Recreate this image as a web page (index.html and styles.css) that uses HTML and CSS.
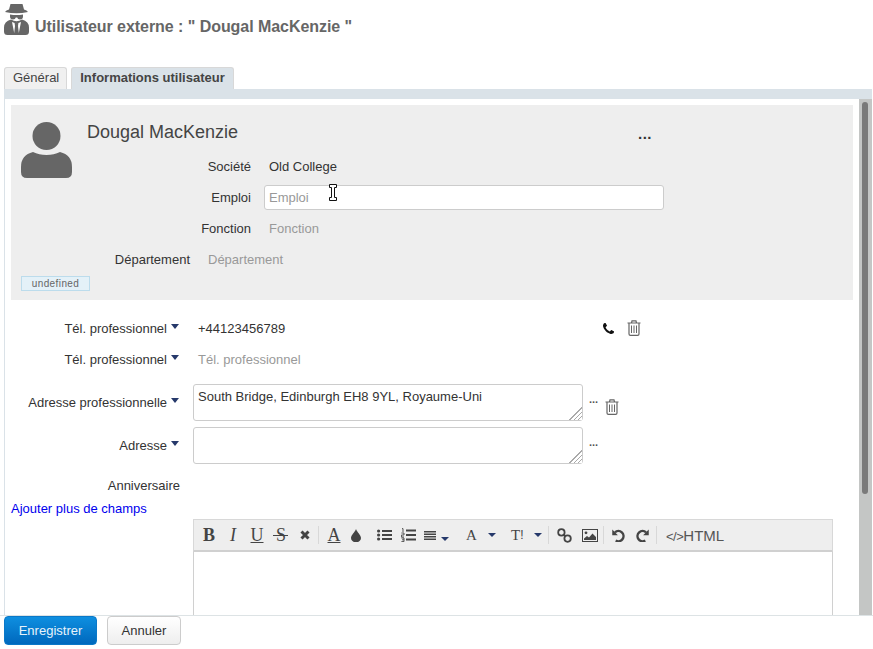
FILE: index.html
```html
<!DOCTYPE html>
<html lang="fr">
<head>
    <meta charset="UTF-8">
    <title>Utilisateur externe</title>
    <link rel="stylesheet" href="styles.css">
</head>
<body>
    <header class="page-title">
        <svg class="spy-icon" viewBox="0 0 25 31" width="25" height="31">
            <path fill="#666" d="M6.5 0 L18.5 0 L20 5.5 Q23 6.2 24 8 Q12.5 10.4 1 8 Q2 6.2 5 5.5 Z"/>
            <path fill="#666" d="M6 10.5 Q12.5 11.5 19 10.5 V12.5 Q19 15.4 16 15.4 Q13.6 15.4 13.2 13.4 H11.8 Q11.4 15.4 9 15.4 Q6 15.4 6 12.5 Z"/>
            <path fill="#666" d="M7 15.5 Q12.5 19 18 15.5 Q25 17.5 25 23.5 V27.5 Q25 31 21.5 31 H3.5 Q0 31 0 27.5 V23.5 Q0 17.5 7 15.5 Z"/>
            <path fill="#fff" d="M8 18 L10.6 19 L11 22 L10.2 29 Z M17 18 L14.4 19 L14 22 L14.8 29 Z"/>
        </svg>
        <h1>Utilisateur externe : " Dougal MacKenzie "</h1>
    </header>

    <nav class="tabs">
        <a class="tab">Général</a>
        <a class="tab tab-active">Informations utilisateur</a>
    </nav>
    <div class="tab-strip"></div>

    <main class="panel">
        <div class="panel-content">
            <section class="profile">
                <svg class="avatar" viewBox="0 0 51 56" width="51" height="56">
                    <circle cx="25.5" cy="14" r="14" fill="#666"/>
                    <path fill="#666" d="M12 30 Q18 33 25.5 33 Q33 33 39 30 Q51 33 51 45 L51 50 Q51 56 45 56 L6 56 Q0 56 0 50 L0 45 Q0 33 12 30 Z"/>
                </svg>
                <div class="profile-main">
                    <div class="profile-name">
                        <span class="name">Dougal MacKenzie</span>
                        <span class="more-dots">...</span>
                    </div>
                    <div class="profile-row">
                        <label>Société</label>
                        <span class="value">Old College</span>
                    </div>
                    <div class="profile-row">
                        <label>Emploi</label>
                        <input class="text-input" type="text" placeholder="Emploi">
                    </div>
                    <div class="profile-row">
                        <label>Fonction</label>
                        <span class="value empty">Fonction</span>
                    </div>
                    <div class="profile-row profile-row-short">
                        <label>Département</label>
                        <span class="value empty">Département</span>
                    </div>
                </div>
                <span class="badge">undefined</span>
            </section>

            <section class="fields">
                <div class="field">
                    <label class="with-caret">Tél. professionnel<i class="caret"></i></label>
                    <div class="field-value">
                        <span class="value phone">+44123456789</span>
                        <svg class="phone-icon" viewBox="0 0 1408 1408" width="11" height="11">
                            <path fill="#111" d="M1408 1112q0 27-10 70.5t-21 68.5q-21 50-122 106-94 51-186 51-27 0-53-3.5t-57.5-12.5-47-14.5-55.5-20.5-49-18q-98-35-175-83-127-79-264-216t-216-264q-48-77-83-175-3-9-18-49t-20.5-55.5-14.5-47-12.5-57.5-3.5-53q0-92 51-186 56-101 106-122 25-11 68.5-21t70.5-10q14 0 21 3 18 6 53 76 11 19 30 54t35 63.5 31 53.5q3 4 17.5 25t21.5 35.5 7 28.5q0 20-28.5 50t-62 55-62 53-28.5 46q0 9 5 22.5t8.5 20.5 14 24 11.5 19q76 137 174 235t235 174q2 1 19 11.5t24 14 20.5 8.5 22.5 5q18 0 46-28.5t53-62 55-62 50-28.5q14 0 28.5 7t35.5 21.5 25 17.5q25 15 53.5 31t63.5 35 54 30q70 35 76 53 3 7 3 21z"/>
                        </svg>
                        <svg class="trash-icon trash-phone" viewBox="0 0 14 16" width="14" height="16">
                            <path fill="none" stroke="#666" stroke-width="1.2" d="M0.5 3 H13.5 M4.5 3 L5 0.8 H9 L9.5 3 M2 3 V14 Q2 15.4 3.4 15.4 H10.6 Q12 15.4 12 14 V3"/>
                            <path fill="none" stroke="#666" d="M4.5 5.5 V13 M7 5.5 V13 M9.5 5.5 V13"/>
                        </svg>
                    </div>
                </div>
                <div class="field">
                    <label class="with-caret">Tél. professionnel<i class="caret"></i></label>
                    <div class="field-value">
                        <span class="value empty">Tél. professionnel</span>
                    </div>
                </div>
                <div class="field field-address">
                    <label class="with-caret">Adresse professionnelle<i class="caret"></i></label>
                    <div class="field-value">
                        <textarea class="address">South Bridge, Edinburgh EH8 9YL, Royaume-Uni</textarea>
                        <span class="small-dots">...</span>
                        <svg class="trash-icon trash-address" viewBox="0 0 14 16" width="14" height="16">
                            <path fill="none" stroke="#666" stroke-width="1.2" d="M0.5 3 H13.5 M4.5 3 L5 0.8 H9 L9.5 3 M2 3 V14 Q2 15.4 3.4 15.4 H10.6 Q12 15.4 12 14 V3"/>
                            <path fill="none" stroke="#666" d="M4.5 5.5 V13 M7 5.5 V13 M9.5 5.5 V13"/>
                        </svg>
                    </div>
                </div>
                <div class="field field-address">
                    <label class="with-caret">Adresse<i class="caret"></i></label>
                    <div class="field-value">
                        <textarea class="address"></textarea>
                        <span class="small-dots">...</span>
                    </div>
                </div>
                <div class="field field-birthday">
                    <label>Anniversaire</label>
                </div>
            </section>

            <a class="add-fields">Ajouter plus de champs</a>

            <section class="editor">
                <div class="toolbar">
                    <span class="tb-btn tb-serif"><b>B</b></span>
                    <span class="tb-btn tb-serif"><i>I</i></span>
                    <span class="tb-btn tb-serif tb-under">U</span>
                    <span class="tb-btn tb-serif tb-strike">S</span>
                    <span class="tb-btn">
                        <svg viewBox="0 0 10 10" width="10" height="10"><path stroke="#444" stroke-width="3" d="M1.5 1.5 L8.5 8.5 M8.5 1.5 L1.5 8.5"/></svg>
                    </span>
                    <span class="tb-sep"></span>
                    <span class="tb-btn tb-serif tb-under">A</span>
                    <span class="tb-btn tb-drop">
                        <svg viewBox="0 0 10 13" width="10" height="13"><path fill="#444" d="M5 0 C6 3 10 6 10 9 A5 4.4 0 0 1 0 9 C0 6 4 3 5 0 Z"/></svg>
                    </span>
                    <span class="tb-btn tb-list">
                        <svg viewBox="0 0 15 12" width="15" height="12">
                            <path fill="#444" d="M5 1 H15 V3 H5 Z M5 5 H15 V7 H5 Z M5 9 H15 V11 H5 Z"/>
                            <circle cx="1.6" cy="2" r="1.6" fill="#444"/><circle cx="1.6" cy="6" r="1.6" fill="#444"/><circle cx="1.6" cy="10" r="1.6" fill="#444"/>
                        </svg>
                    </span>
                    <span class="tb-btn">
                        <svg viewBox="0 0 15 14" width="15" height="14">
                            <path fill="#444" d="M5 1.5 H15 V3.5 H5 Z M5 6 H15 V8 H5 Z M5 10.5 H15 V12.5 H5 Z"/>
                            <path fill="none" stroke="#444" stroke-width="0.9" d="M1 0.6 H2 V4 M0.4 5 H3 V7 H0.4 V9 H3 M0.4 10 H3 V13.6 H0.4 M1 11.8 H3"/>
                        </svg>
                    </span>
                    <span class="tb-btn tb-align">
                        <svg viewBox="0 0 12 9" width="12" height="9"><path fill="#444" d="M0 0 H12 V1.5 H0 Z M0 2.5 H12 V4 H0 Z M0 5 H12 V6.5 H0 Z M0 7.5 H12 V9 H0 Z"/></svg>
                        <i class="tb-caret tb-caret-low"></i>
                    </span>
                    <span class="tb-btn tb-font tb-serif">A<i class="tb-caret"></i></span>
                    <span class="tb-btn tb-size tb-serif">T<small>!</small><i class="tb-caret"></i></span>
                    <span class="tb-sep tb-sep-size"></span>
                    <span class="tb-btn tb-link">
                        <svg viewBox="0 0 15 15" width="15" height="15">
                            <circle cx="4.4" cy="4.4" r="3.2" fill="none" stroke="#444" stroke-width="1.8"/>
                            <circle cx="10.6" cy="10.6" r="3.2" fill="none" stroke="#444" stroke-width="1.8"/>
                            <path stroke="#444" stroke-width="1.8" d="M6.5 6.5 L8.5 8.5"/>
                        </svg>
                    </span>
                    <span class="tb-btn tb-image">
                        <svg viewBox="0 0 16 13" width="16" height="13">
                            <rect x="0.5" y="0.5" width="15" height="12" fill="none" stroke="#444"/>
                            <circle cx="4" cy="3.8" r="1.4" fill="#444"/>
                            <path fill="#444" d="M2 11 L2 9.5 L5 7 L7 8.5 L10.5 4.5 L14 8 V11 Z"/>
                        </svg>
                    </span>
                    <span class="tb-sep tb-sep-image"></span>
                    <span class="tb-btn tb-undo">
                        <svg viewBox="0 0 14 14" width="13" height="13">
                            <path fill="none" stroke="#444" stroke-width="2.6" d="M3.2 3.6 A5.5 5.5 0 1 1 4 12.4"/>
                            <path fill="#444" d="M0.3 0.6 L0.3 6.6 L6.3 6.6 Z"/>
                        </svg>
                    </span>
                    <span class="tb-btn tb-redo">
                        <svg viewBox="0 0 14 14" width="13" height="13">
                            <path fill="none" stroke="#444" stroke-width="2.6" d="M10.8 3.6 A5.5 5.5 0 1 0 10 12.4"/>
                            <path fill="#444" d="M13.7 0.6 L13.7 6.6 L7.7 6.6 Z"/>
                        </svg>
                    </span>
                    <span class="tb-sep tb-sep-redo"></span>
                    <span class="tb-html"><small>&lt;/&gt;</small>HTML</span>
                </div>
                <div class="editor-body"></div>
            </section>
        </div>
        <div class="scrollbar"><div class="scroll-thumb"></div></div>
    </main>

    <footer class="actions">
        <button class="btn btn-primary">Enregistrer</button>
        <button class="btn">Annuler</button>
    </footer>

    <!-- mouse pointer caught by the screenshot -->
    <svg class="mouse-cursor" viewBox="0 0 10 17" width="10" height="17">
        <path fill="#fff" stroke="#111" stroke-width="1" d="M1.5 0.5 H8.5 V3.5 H6.5 V13.5 H8.5 V16.5 H1.5 V13.5 H3.5 V3.5 H1.5 Z"/>
    </svg>
</body>
</html>
```

FILE: styles.css
```css
/* Reset some default styles */
* {
    margin: 0;
    padding: 0;
    box-sizing: border-box;
    font-family: 'Liberation Sans', Arial, sans-serif;
}

body {
    position: relative;
    display: flex;
    flex-direction: column;
    height: 649px;
    overflow: hidden;
    background-color: #ffffff;
    color: #333333;
    font-size: 13px;
}

/* Page title */
.page-title {
    display: flex;
    align-items: flex-start;
    height: 67px;
    flex-shrink: 0;
    padding: 4px 0 0 4px;
}

.spy-icon {
    flex-shrink: 0;
}

.page-title h1 {
    margin: 13px 0 0 6px;
    font-size: 16px;
    line-height: 19px;
    letter-spacing: -0.05px;
    color: #666666;
}

/* Tabs */
.tabs {
    display: flex;
    gap: 4px;
    height: 22px;
    flex-shrink: 0;
    padding-left: 4px;
}

.tab {
    padding: 0 7px 0 8px;
    line-height: 20px;
    background-color: #f0f0f0;
    border: 1px solid #d8d8d8;
    border-bottom: 0;
    border-radius: 3px 3px 0 0;
    color: #444444;
}

.tab-active {
    padding-right: 8px;
    background-color: #dae2e8;
    font-weight: 700;
}

.tab-strip {
    height: 10px;
    flex-shrink: 0;
    margin: 0 1px 0 4px;
    background-color: #dae2e8;
}

/* Main panel */
.panel {
    display: flex;
    flex: 1;
    min-height: 0;
    margin: 0 1px 0 4px;
    border-left: 1px solid #dae2e8;
    overflow: hidden;
}

.panel-content {
    width: 854px;
    flex-shrink: 0;
    padding: 6px 0 0 6px;
}

.scrollbar {
    width: 13px;
    height: 100%;
    padding: 3px 4px 0 3px;
    background-color: #c4c6c5;
}

.scroll-thumb {
    width: 6px;
    height: 392px;
    background-color: #7a7a7a;
    border-radius: 3px;
}

/* Profile block */
.profile {
    display: grid;
    grid-template-columns: 76px 1fr;
    align-content: start;
    width: 842px;
    height: 195px;
    background-color: #eeeeee;
}

.avatar {
    margin: 17px 0 0 10px;
}

.profile-name {
    display: flex;
    justify-content: space-between;
    width: 565px;
    height: 46px;
    padding-top: 17px;
}

.name {
    font-size: 18px;
    line-height: 21px;
    color: #444444;
}

.more-dots {
    margin-top: 3px;
    font-size: 15px;
    line-height: 17px;
    font-weight: 700;
    letter-spacing: 0.5px;
}

.profile-row {
    display: grid;
    grid-template-columns: 164px 400px;
    column-gap: 13px;
    align-items: center;
    height: 31px;
}

.profile-row-short {
    grid-template-columns: 103px 400px;
}

label {
    text-align: right;
    color: #333333;
}

.value {
    padding-left: 5px;
    color: #333333;
}

.value.empty {
    color: #999999;
}

.text-input {
    width: 400px;
    height: 25px;
    padding: 0 4px;
    border: 1px solid #cccccc;
    border-radius: 3px;
    background-color: #ffffff;
    font-size: 13px;
}

.text-input::placeholder {
    color: #999999;
}

.badge {
    grid-column: 1 / 3;
    justify-self: start;
    width: 69px;
    height: 15px;
    margin: 1px 0 0 10px;
    background-color: #e4f1f8;
    border: 1px solid #bcdcec;
    color: #666666;
    font-size: 10px;
    line-height: 13px;
    letter-spacing: 0.4px;
    text-align: center;
}

/* Contact fields */
.fields {
    padding-top: 13px;
}

.field {
    display: grid;
    grid-template-columns: 169px 1fr;
    column-gap: 13px;
    align-items: center;
    height: 31px;
}

.field-address {
    height: 37px;
    margin-bottom: 6px;
}

.field-address:nth-child(3) {
    margin-top: 9px;
}

.field-birthday {
    height: 31px;
}

.with-caret {
    position: relative;
    padding-right: 13px;
}

.caret {
    position: absolute;
    top: 3px;
    right: 1px;
    border-left: 4px solid transparent;
    border-right: 4px solid transparent;
    border-top: 5px solid #26396b;
}

.field-value {
    display: flex;
    align-items: center;
    height: 100%;
}

.phone {
    width: 410px;
}

.phone-icon {
    margin-bottom: 1px;
}

.trash-phone {
    margin: 0 0 1px 13px;
}

.address {
    display: block;
    width: 390px;
    height: 37px;
    padding: 4px;
    border: 1px solid #cccccc;
    border-radius: 3px;
    font-size: 13px;
    line-height: 15px;
    color: #333333;
}

/* hatched corner of the textarea */
.address::-webkit-resizer {
    background:
        linear-gradient(135deg, #ffffff 50%, transparent 50%),
        repeating-linear-gradient(135deg, #aaaaaa 0 1px, #ffffff 1px 3px);
}

.small-dots {
    align-self: flex-start;
    margin: 9px 0 0 6px;
    font-size: 11px;
    font-weight: 700;
    color: #555555;
}

.trash-address {
    margin: 8px 0 0 7px;
}

.add-fields {
    display: block;
    height: 18px;
    line-height: 16px;
    color: #0000ee;
}

/* Rich text editor */
.editor {
    width: 640px;
    margin-left: 182px;
}

.toolbar {
    display: flex;
    align-items: center;
    height: 33px;
    padding-left: 3px;
    background-color: #eeeeee;
    border: 1px solid #d8d8d8;
    border-bottom: 2px solid #d0d0d0;
    color: #444444;
}

.tb-btn {
    position: relative;
    display: flex;
    align-items: center;
    justify-content: center;
    width: 24px;
    flex-shrink: 0;
}

.tb-serif,
.tb-serif i,
.tb-serif b {
    font-family: 'Liberation Serif', serif;
    font-size: 18px;
}

.tb-under {
    text-decoration: underline;
}

/* the bar runs past the letter on both sides */
.tb-strike::after {
    content: "";
    position: absolute;
    top: 10px;
    left: 4px;
    width: 15px;
    height: 1px;
    background-color: #444444;
}

.tb-sep {
    width: 1px;
    height: 18px;
    flex-shrink: 0;
    margin: 0 3px 0 1px;
    background-color: #d8d8d8;
}

.tb-drop {
    width: 20px;
}

.tb-list {
    margin-left: 6px;
}

.tb-align {
    width: 26px;
    margin-left: 4px;
    justify-content: flex-start;
}

.tb-font {
    width: 31px;
    margin-left: 16px;
    justify-content: flex-start;
}

.tb-size {
    width: 30px;
    margin-left: 14px;
    justify-content: flex-start;
}

.tb-size small {
    font-size: 12px;
}

.tb-font,
.tb-size {
    font-size: 15px;
}

.tb-caret {
    margin-left: 11px;
    border-left: 4px solid transparent;
    border-right: 4px solid transparent;
    border-top: 4px solid #26396b;
}

.tb-caret-low {
    margin: 7px 0 0 5px;
}

.tb-size .tb-caret {
    margin-left: 10px;
}

.tb-sep-size {
    margin: 0 0 0 7px;
}

.tb-link {
    width: 15px;
    margin-left: 8px;
}

.tb-image {
    width: 16px;
    margin-left: 10px;
}

.tb-sep-image {
    margin: 0 0 0 5px;
}

.tb-undo {
    width: 13px;
    margin-left: 8px;
}

.tb-redo {
    width: 13px;
    margin-left: 11px;
}

.tb-sep-redo {
    margin: 0 0 0 7px;
}

.tb-html {
    margin-left: 9px;
    font-size: 15px;
    white-space: nowrap;
    color: #555555;
}

.tb-html small {
    font-size: 13px;
    letter-spacing: -0.5px;
}

.editor-body {
    height: 200px;
    border: 1px solid #d0d0d0;
    border-top: 0;
    background-color: #ffffff;
}

/* Footer buttons */
.actions {
    display: flex;
    align-items: flex-start;
    gap: 10px;
    height: 34px;
    flex-shrink: 0;
    padding: 0 0 0 4px;
    border-top: 1px solid #dde3e5;
    background-color: #ffffff;
}

.btn {
    width: 74px;
    height: 29px;
    background: linear-gradient(#ffffff, #eeeeee);
    border: 1px solid #cccccc;
    border-radius: 4px;
    font-size: 13px;
    color: #333333;
}

.btn-primary {
    width: 93px;
    background: linear-gradient(#0e8fe0, #0068bd);
    border-color: #0a78c8;
    color: #e8f3fb;
}

.mouse-cursor {
    position: absolute;
    top: 184px;
    left: 328px;
}
```
